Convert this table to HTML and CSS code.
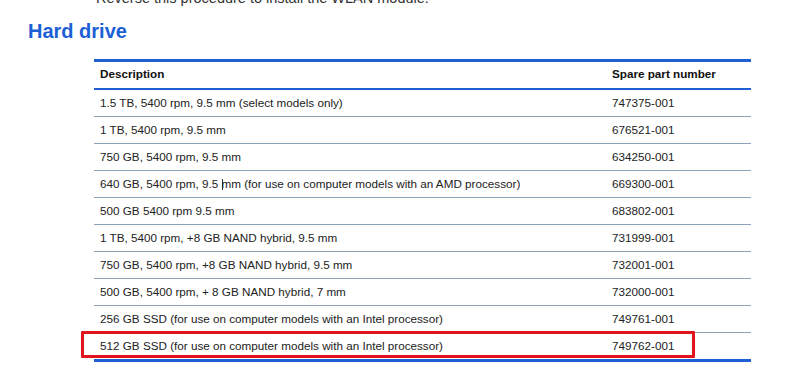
FILE: index.html
```html
<!DOCTYPE html>
<html>
<head>
<meta charset="utf-8">
<link rel="stylesheet" href="styles.css">
</head>
<body>
<p class="intro">Reverse this procedure to install the WLAN module.</p>
<h1 class="title">Hard drive</h1>
<div class="table-wrap">
  <table class="parts">
    <thead>
      <tr><th class="c1">Description</th><th class="c2">Spare part number</th></tr>
    </thead>
    <tbody>
      <tr><td>1.5 TB, 5400 rpm, 9.5 mm (select models only)</td><td>747375-001</td></tr>
      <tr><td>1 TB, 5400 rpm, 9.5 mm</td><td>676521-001</td></tr>
      <tr><td>750 GB, 5400 rpm, 9.5 mm</td><td>634250-001</td></tr>
      <tr><td>640 GB, 5400 rpm, 9.5 <span class="caret"></span>mm (for use on computer models with an AMD processor)</td><td>669300-001</td></tr>
      <tr><td>500 GB 5400 rpm 9.5 mm</td><td>683802-001</td></tr>
      <tr><td>1 TB, 5400 rpm, +8 GB NAND hybrid, 9.5 mm</td><td>731999-001</td></tr>
      <tr><td>750 GB, 5400 rpm, +8 GB NAND hybrid, 9.5 mm</td><td>732001-001</td></tr>
      <tr><td>500 GB, 5400 rpm, + 8 GB NAND hybrid, 7 mm</td><td>732000-001</td></tr>
      <tr><td>256 GB SSD (for use on computer models with an Intel processor)</td><td>749761-001</td></tr>
      <tr class="last"><td>512 GB SSD (for use on computer models with an Intel processor)</td><td>749762-001</td></tr>
    </tbody>
  </table>
  <div class="highlight"></div>
</div>
</body>
</html>
```

FILE: styles.css
```css
html, body {
  margin: 0;
  padding: 0;
  background: #ffffff;
}
body {
  font-family: "Liberation Sans", Arial, sans-serif;
  color: #222222;
  width: 800px;
  height: 385px;
  overflow: hidden;
}
.intro {
  margin: -9px 0 0 96px;
  font-size: 14.5px;
  line-height: 14px;
  color: #333333;
}
.title {
  margin: 14px 0 0 28px;
  font-size: 20px;
  line-height: 24px;
  font-weight: bold;
  color: #1b5fd6;
}
.table-wrap {
  position: relative;
  margin: 16px 0 0 94px;
  width: 657px;
}
.parts {
  border-collapse: separate;
  border-spacing: 0;
  width: 657px;
  table-layout: fixed;
  font-size: 11.7px;
}
.parts th {
  text-align: left;
  font-weight: bold;
  color: #111111;
  height: 24px;
  padding: 0 0 2px 6px;
  border-top: 3px solid #1f60d2;
  border-bottom: 2px solid #1f60d2;
  line-height: 24px;
  vertical-align: middle;
}
.parts .c1 { width: 506px; }
.parts .c2 { width: 139px; }
.parts td {
  height: 26px;
  padding: 0 0 0 6px;
  border-bottom: 1px solid #8ba2bb;
  line-height: 26px;
  vertical-align: middle;
  white-space: nowrap;
  overflow: hidden;
}
.parts tr.last td {
  border-bottom: 3px solid #1f60d2;
}
.caret {
  display: inline-block;
  width: 1px;
  height: 11px;
  margin-right: -1px;
  background: #333333;
  vertical-align: -2px;
}
.highlight {
  position: absolute;
  left: -13px;
  top: 272px;
  width: 614px;
  height: 27px;
  box-sizing: border-box;
  border: 3px solid #e1141d;
  border-radius: 1px;
}
```
